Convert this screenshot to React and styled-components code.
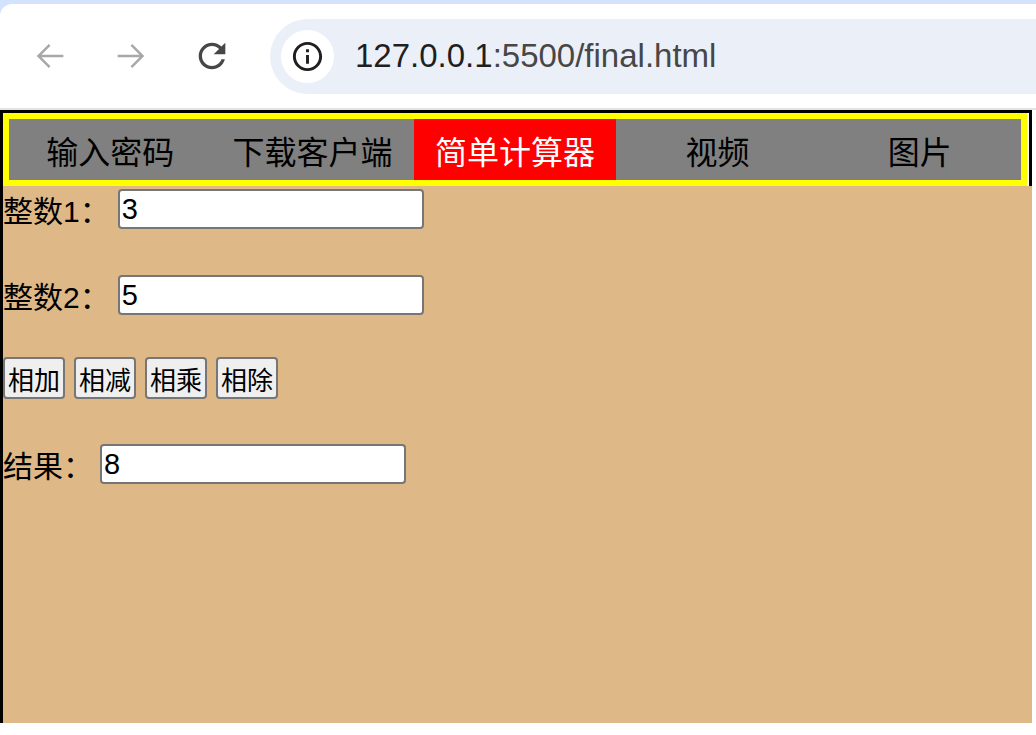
import styled, { createGlobalStyle } from "styled-components";

const tabs = ["输入密码", "下载客户端", "简单计算器", "视频", "图片"];
const ops = ["相加", "相减", "相乘", "相除"];

function BackIcon() {
  return (
    <svg width="40" height="40" viewBox="0 0 24 24" fill="currentColor">
      <path d="M20 11.25H6.9l5.4-5.4-1.06-1.06L4.03 12l7.21 7.21 1.06-1.06-5.4-5.4H20z" />
    </svg>
  );
}

function ForwardIcon() {
  return (
    <svg width="40" height="40" viewBox="0 0 24 24" fill="currentColor">
      <path d="M4 11.25h13.1l-5.4-5.4 1.06-1.06L19.97 12l-7.21 7.21-1.06-1.06 5.4-5.4H4z" />
    </svg>
  );
}

function ReloadIcon() {
  return (
    <svg width="40" height="40" viewBox="0 0 24 24" fill="currentColor">
      <path d="M17.65 6.35C16.2 4.9 14.21 4 12 4c-4.42 0-7.99 3.58-7.99 8s3.57 8 7.99 8c3.73 0 6.84-2.55 7.73-6h-2.08c-.82 2.33-3.040 4-5.65 4-3.31 0-6-2.69-6-6s2.69-6 6-6c1.66 0 3.14.69 4.220 1.78L13 11h7V4l-2.35 2.35z" />
    </svg>
  );
}

function InfoIcon() {
  return (
    <svg width="35" height="35" viewBox="0 0 24 24" fill="currentColor">
      <path d="M11 7h2v2h-2zm0 4h2v6h-2zm1-9C6.48 2 2 6.48 2 12s4.48 10 10 10 10-4.48 10-10S17.52 2 12 2zm0 18c-4.41 0-8-3.59-8-8s3.59-8 8-8 8 3.59 8 8-3.59 8-8 8z" />
    </svg>
  );
}

export default function App() {
  return (
    <>
      <GlobalStyle />
      <Chrome>
        <Toolbar>
          <IconButton $dim>
            <BackIcon />
          </IconButton>
          <IconButton $dim>
            <ForwardIcon />
          </IconButton>
          <IconButton>
            <ReloadIcon />
          </IconButton>
          <Omnibox>
            <SiteInfo>
              <InfoIcon />
            </SiteInfo>
            <Url>
              <Host>127.0.0.1</Host>:5500/final.html
            </Url>
          </Omnibox>
        </Toolbar>
      </Chrome>
      <Frame>
        <Nav>
          {tabs.map((t, i) => (
            <NavItem key={t} $active={i === 2}>
              {t}
            </NavItem>
          ))}
        </Nav>
        <Calc>
          <Row $top={0}>
            <Label>整数1：</Label>
            <Field defaultValue="3" $gap={8} />
          </Row>
          <Row $top={40}>
            <Label>整数2：</Label>
            <Field defaultValue="5" $gap={8} />
          </Row>
          <Row $top={37}>
            <Buttons>
              {ops.map((o) => (
                <OpButton key={o}>{o}</OpButton>
              ))}
            </Buttons>
          </Row>
          <Row $top={40}>
            <Label>结果：</Label>
            <Field defaultValue="8" $gap={7} />
          </Row>
        </Calc>
      </Frame>
    </>
  );
}

const GlobalStyle = createGlobalStyle`
  body {
    margin: 0;
    background: #fff;
    font-family: "Liberation Sans", "Noto Sans CJK SC", sans-serif;
  }
`;

const Chrome = styled.div`
  background: #d3e3fd;
  padding-top: 4px;
`;

const Toolbar = styled.div`
  box-sizing: border-box;
  height: 106px;
  background: #fff;
  border-top-left-radius: 12px;
  border-bottom: 2px solid #e3e3e3;
  display: flex;
  align-items: center;
  padding-left: 9px;
  overflow: hidden;
`;

const IconButton = styled.div`
  flex: none;
  width: 81px;
  display: flex;
  justify-content: center;
  align-items: center;
  color: ${(p) => (p.$dim ? "#a8a8a8" : "#474747")};
`;

const Omnibox = styled.div`
  flex: none;
  width: 900px;
  height: 75px;
  margin-left: 18px;
  border-radius: 38px;
  background: #ebf0f8;
  display: flex;
  align-items: center;
`;

const SiteInfo = styled.div`
  width: 53px;
  height: 53px;
  margin-left: 11px;
  border-radius: 50%;
  background: #fff;
  color: #1f1f1f;
  display: flex;
  justify-content: center;
  align-items: center;
`;

const Url = styled.div`
  margin-left: 21px;
  font-size: 33px;
  color: #474747;
`;

const Host = styled.span`
  color: #1f1f1f;
`;

const Frame = styled.div`
  box-sizing: border-box;
  width: 1032px;
  height: 613px;
  border: 3px solid #000;
  border-bottom: none;
  background: #fff;
`;

const Nav = styled.div`
  box-sizing: border-box;
  width: 1024px;
  height: 73px;
  border: 6px solid #ffff00;
  background: #808080;
  display: grid;
  grid-template-columns: repeat(5, 1fr);
`;

const NavItem = styled.div`
  display: flex;
  justify-content: center;
  align-items: center;
  font-family: "Noto Sans CJK SC", sans-serif;
  font-size: 32px;
  background: ${(p) => (p.$active ? "#ff0000" : "transparent")};
  color: ${(p) => (p.$active ? "#fff" : "#000")};
`;

const Calc = styled.div`
  height: 537px;
  margin-right: -3px;
  background: #deb887;
  display: flex;
  flex-direction: column;
`;

const Row = styled.div`
  height: 46px;
  margin-top: ${(p) => p.$top}px;
  display: flex;
  align-items: center;
`;

const Label = styled.span`
  font-family: "Liberation Sans", "Noto Sans CJK SC", sans-serif;
  font-size: 30px;
  color: #000;
`;

const Field = styled.input`
  box-sizing: border-box;
  width: 306px;
  height: 40px;
  margin: 0 0 0 ${(p) => p.$gap}px;
  padding: 0 2px;
  border: 2px solid #767676;
  border-radius: 4px;
  background: #fff;
  font-family: "Liberation Sans", sans-serif;
  font-size: 29px;
  color: #000;
`;

const Buttons = styled.div`
  display: flex;
  gap: 9px;
`;

const OpButton = styled.button`
  box-sizing: border-box;
  height: 42px;
  padding: 0 3px;
  border: 2px solid #767676;
  border-radius: 4px;
  background: #efefef;
  font-family: "Noto Sans CJK SC", sans-serif;
  font-size: 26px;
  color: #000;
`;
